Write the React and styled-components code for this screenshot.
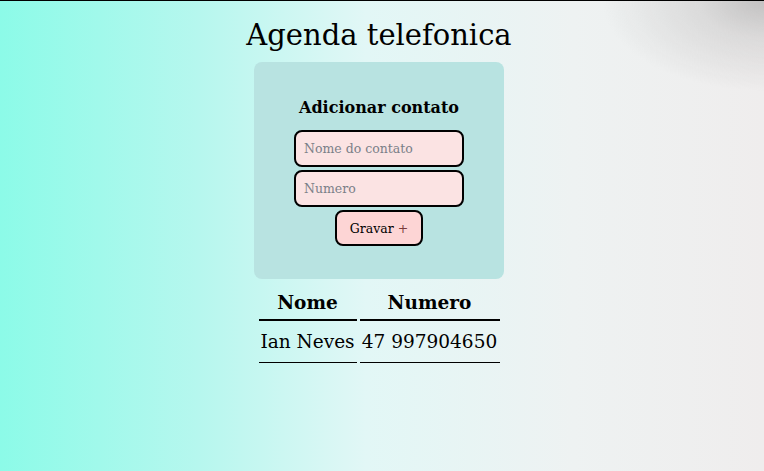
import React, { useState } from 'react';
import styled, { createGlobalStyle } from 'styled-components';

const GlobalStyle = createGlobalStyle`
  html, body {
    margin: 0;
    padding: 0;
    height: 100%;
  }
  body {
    font-family: "DejaVu Serif", "Liberation Serif", serif;
    background: linear-gradient(90deg, #8cfbe8 0%, #b6f7ee 26%, #e2f7f6 48%, #eef2f2 75%, #efeded 100%);
    border-top: 1px solid #000;
    box-sizing: border-box;
    overflow: hidden;
  }
  #root {
    min-height: 100%;
  }
`;

const CornerShade = styled.div`
  position: fixed;
  top: 1px;
  right: 0;
  width: 170px;
  height: 90px;
  background: radial-gradient(ellipse 95% 100% at 100% 0%, rgba(140, 140, 140, 0.45) 0%, rgba(160, 160, 160, 0.25) 40%, rgba(200, 200, 200, 0) 100%);
  pointer-events: none;
`;

const Page = styled.main`
  display: flex;
  flex-direction: column;
  align-items: center;
  padding-right: 6px;
`;

const Title = styled.h1`
  font-size: 29px;
  font-weight: 400;
  margin: 17px 0 10px;
  line-height: 34px;
  color: #000;
`;

const Card = styled.section`
  width: 250px;
  height: 217px;
  box-sizing: border-box;
  background: #b8e3e1;
  border-radius: 8px;
  display: flex;
  flex-direction: column;
  align-items: center;
  padding-top: 35px;
`;

const CardTitle = styled.h2`
  font-size: 16px;
  font-weight: 700;
  margin: 0 0 11px;
  line-height: 22px;
`;

const Form = styled.form`
  display: flex;
  flex-direction: column;
  align-items: center;
  gap: 3px;
`;

const Input = styled.input`
  width: 170px;
  height: 37px;
  box-sizing: border-box;
  border: 2px solid #000;
  border-radius: 8px;
  background: #fbe3e3;
  padding: 0 8px;
  font-family: inherit;
  font-size: 12.5px;
  color: #222;
  outline: none;

  &::placeholder {
    color: #7a7f88;
  }
`;

const Button = styled.button`
  width: 88px;
  height: 36px;
  box-sizing: border-box;
  border: 2px solid #000;
  border-radius: 8px;
  background: #fdd5d5;
  font-family: inherit;
  font-size: 12.5px;
  color: #000;
  cursor: pointer;
`;

const Plus = styled.span`
  color: #7a3b3b;
`;

const Table = styled.table`
  margin-top: 6px;
  border-spacing: 3px 0;
  font-size: 18.5px;
`;

const Th = styled.th`
  font-weight: 700;
  height: 34px;
  padding: 0;
  border-bottom: 2px solid #000;
  width: ${p => p.$w}px;
`;

const Td = styled.td`
  height: 41px;
  padding: 0;
  border-bottom: 1px solid #000;
  white-space: nowrap;
  text-align: center;
`;

export default function App() {
  const [contacts] = useState([{ nome: 'Ian Neves', numero: '47 997904650' }]);

  return (
    <>
      <GlobalStyle />
      <CornerShade />
      <Page>
        <Title>Agenda telefonica</Title>
        <Card>
          <CardTitle>Adicionar contato</CardTitle>
          <Form onSubmit={e => e.preventDefault()}>
            <Input placeholder="Nome do contato" />
            <Input placeholder="Numero" />
            <Button type="submit">
              Gravar <Plus>+</Plus>
            </Button>
          </Form>
        </Card>
        <Table>
          <thead>
            <tr>
              <Th $w={98}>Nome</Th>
              <Th $w={140}>Numero</Th>
            </tr>
          </thead>
          <tbody>
            {contacts.map(c => (
              <tr key={c.numero}>
                <Td>{c.nome}</Td>
                <Td>{c.numero}</Td>
              </tr>
            ))}
          </tbody>
        </Table>
      </Page>
    </>
  );
}
